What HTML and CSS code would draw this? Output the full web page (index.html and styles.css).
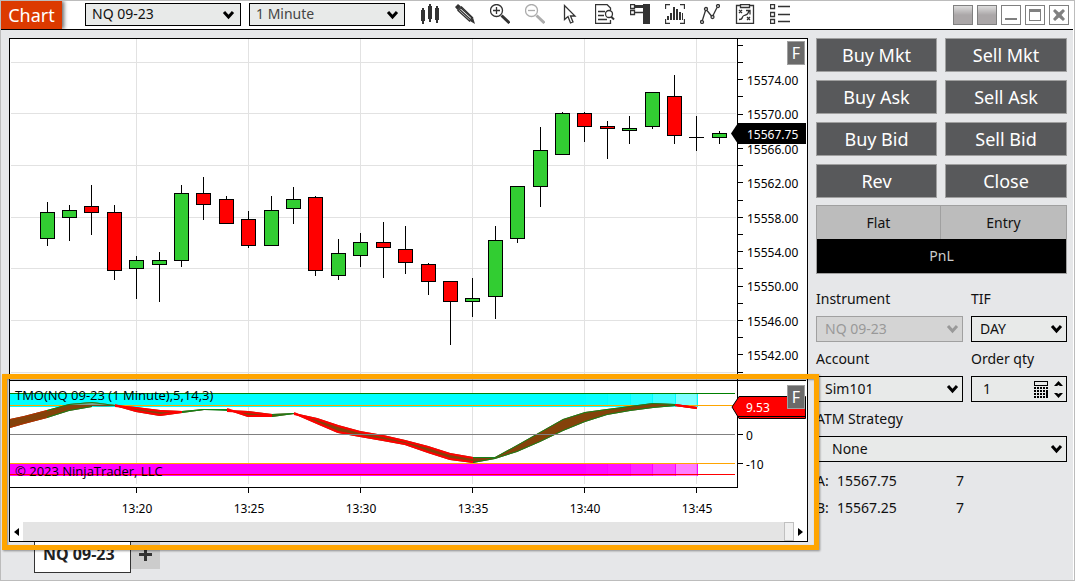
FILE: index.html
```
<!DOCTYPE html>
<html lang="en">
<head>
    <meta charset="UTF-8">
    <meta name="viewport" content="width=device-width, initial-scale=1.0">
    <title>Chart - NQ 09-23</title>
    <link rel="stylesheet" href="styles.css">
</head>
<body>
    <div class="window">
        <header class="toolbar">
            <h1 class="title">Chart</h1>
            <div class="select toolbar-select">
                <select aria-label="Instrument">
                    <option>NQ 09-23</option>
                </select>
                <svg class="chevron" viewBox="0 0 13 10"><path d="M2 2l4.500 5L11 2"/></svg>
            </div>
            <div class="select toolbar-select interval">
                <select aria-label="Interval">
                    <option>1 Minute</option>
                </select>
                <svg class="chevron" viewBox="0 0 13 10"><path d="M2 2l4.500 5L11 2"/></svg>
            </div>
            <nav class="tools">
                <button type="button" aria-label="Chart style">
                    <svg viewBox="0 0 20 20"><path class="fill" d="M1 6h1V4h2v2h1v11H4v3H2v-3H1zM8 2h1V0h2v2h1v13h-1v3H9v-3H8zM15 4h1V2h2v2h1v12h-1v3h-2v-3h-1z"/></svg>
                </button>
                <button type="button" aria-label="Drawing tools">
                    <svg viewBox="0 0 20 20"><path class="fill" d="M0 3l3-3 3 2.500L2.500 6zM15 17l3-3.500 2 6.500z"/><path class="line" d="M3 6.500L14.500 17l3-3.500L6.500 3z"/><path class="line" d="M4.500 5.500l11 10M6 4l11 10"/></svg>
                </button>
                <button type="button" aria-label="Zoom in">
                    <svg viewBox="0 0 20 20"><circle class="line" cx="6.500" cy="6.500" r="6"/><path class="line" d="M6.500 3v7M3 6.500h7"/><path class="line handle" d="M11.500 11.500l8 7.500"/></svg>
                </button>
                <button type="button" class="dim" aria-label="Zoom out" disabled>
                    <svg viewBox="0 0 20 20"><circle class="line" cx="6.500" cy="6.500" r="6"/><path class="line" d="M3 6.500h7"/><path class="line handle" d="M11.500 11.500l8 7.500"/></svg>
                </button>
                <button type="button" aria-label="Cursor">
                    <svg viewBox="0 0 20 20"><path class="line" d="M4.500 1.500v14L8 12.500l2.500 6.500 2.500-1-2.500-6H15z"/></svg>
                </button>
                <button type="button" aria-label="Data box">
                    <svg viewBox="0 0 20 20"><path class="line" d="M15.500 6V4L12 .500H.500v19h15V16"/><path class="line" d="M3 7.500h7M3 11.500h6M3 15.500h9"/><circle class="line" cx="14" cy="10" r="3.500"/><path class="line thick" d="M16 12.500l3 3"/></svg>
                </button>
                <button type="button" aria-label="Chart trader">
                    <svg viewBox="0 0 20 20"><path class="fill" d="M13 0h7v20h-7z"/><path class="line" d="M.500.500h4v4h-4zM.500 6.500h4v4h-4zM5 8.500h8"/><path class="fill" d="M5 1h8v3H5z"/></svg>
                </button>
                <button type="button" aria-label="Indicators">
                    <svg viewBox="0 0 20 20"><path class="line" d="M5 .500H.500V5M15 .500h4.500V5M5 19.500H.500V15M15 19.500h4.500V15"/><path class="fill" d="M2 12h2v4H2zM5 9h2v7H5zM8 3h2v13H8zM11 5h2v11h-2zM14 8h2v8h-2zM17 9h1v7h-1z"/></svg>
                </button>
                <button type="button" aria-label="Strategies">
                    <svg viewBox="0 0 20 20"><path class="line" d="M2.500 16L5.500 6.500M7 6.500l4.500 5.500M13 11.500l4-8"/><circle class="line" cx="2" cy="18" r="1.500"/><circle class="line" cx="6" cy="5" r="1.500"/><circle class="line" cx="12.500" cy="13" r="1.500"/><circle class="line" cx="18" cy="2" r="1.500"/></svg>
                </button>
                <button type="button" aria-label="Strategy plan">
                    <svg viewBox="0 0 20 20"><path class="line" d="M5 1.500H1.500v18h17v-18H15M5.500.500h9v3h-9z"/><path class="line" d="M4 6l3 3M7 6L4 9M12 13l3 3M15 13l-3 3M4 15.500c5 0 2-3 5-4s4-1 5-5M11 6.500h4v4"/></svg>
                </button>
                <button type="button" aria-label="Properties">
                    <svg viewBox="0 0 20 20"><path class="line" d="M.500.500h4v4h-4zM.500 8.500h4v4h-4zM.500 15.500h4v4h-4zM8 2.500h12M8 10.500h12M8 17.500h12"/></svg>
                </button>
            </nav>
            <div class="window-buttons">
                <button type="button" class="shaded" aria-label="Link instrument"></button>
                <button type="button" class="shaded" aria-label="Link interval"></button>
                <button type="button" aria-label="Minimize"><svg viewBox="0 0 18 18"><path d="M3 12h12v2H3z"/></svg></button>
                <button type="button" aria-label="Maximize"><svg viewBox="0 0 18 18"><path d="M3 3h12v12H3zM4 6v8h10V6z" fill-rule="evenodd"/></svg></button>
                <button type="button" aria-label="Close window"><svg viewBox="0 0 18 18"><path d="M3 5l2-2 4 3.500L13 3l2 2-3.500 4 3.500 4-2 2-4-3.500L5 15l-2-2 3.500-4z"/></svg></button>
            </div>
        </header>

        <div class="content">
            <main class="chart-column">
                <div class="chart">
                    <svg class="plot" id="plot" viewBox="10 39 797 483"></svg>
                    <button type="button" class="fixed-scale">F</button>
                    <button type="button" class="fixed-scale lower">F</button>
                    <div class="scrollbar">
                        <button type="button" aria-label="Scroll left"><svg viewBox="0 0 5 8"><path d="M5 0v8L0 4z"/></svg></button>
                        <div class="track"><div class="thumb"></div></div>
                        <button type="button" aria-label="Scroll right"><svg viewBox="0 0 5 8"><path d="M0 0v8l5-4z"/></svg></button>
                    </div>
                    <div class="highlight"></div>
                </div>
                <div class="tabs">
                    <button type="button" class="tab">NQ 09-23</button>
                    <button type="button" class="add-tab" aria-label="Add tab"><svg viewBox="0 0 13 13"><path d="M5 0h3v5h5v3H8v5H5V8H0V5h5z"/></svg></button>
                </div>
            </main>

            <aside class="trader">
                <div class="orders">
                    <button type="button">Buy Mkt</button>
                    <button type="button">Sell Mkt</button>
                    <button type="button">Buy Ask</button>
                    <button type="button">Sell Ask</button>
                    <button type="button">Buy Bid</button>
                    <button type="button">Sell Bid</button>
                    <button type="button">Rev</button>
                    <button type="button">Close</button>
                </div>
                <div class="position">
                    <div class="position-row">
                        <span>Flat</span>
                        <span>Entry</span>
                    </div>
                    <div class="pnl">PnL</div>
                </div>
                <div class="fields">
                    <div class="field">
                        <label for="instrument">Instrument</label>
                        <div class="select disabled">
                            <select id="instrument" disabled>
                                <option>NQ 09-23</option>
                            </select>
                            <svg class="chevron" viewBox="0 0 13 10"><path d="M2 2l4.500 5L11 2"/></svg>
                        </div>
                    </div>
                    <div class="field">
                        <label for="tif">TIF</label>
                        <div class="select">
                            <select id="tif">
                                <option>DAY</option>
                            </select>
                            <svg class="chevron" viewBox="0 0 13 10"><path d="M2 2l4.500 5L11 2"/></svg>
                        </div>
                    </div>
                    <div class="field">
                        <label for="account">Account</label>
                        <div class="select">
                            <select id="account">
                                <option>Sim101</option>
                            </select>
                            <svg class="chevron" viewBox="0 0 13 10"><path d="M2 2l4.500 5L11 2"/></svg>
                        </div>
                    </div>
                    <div class="field">
                        <label for="qty">Order qty</label>
                        <div class="qty">
                            <input id="qty" type="number" value="1" min="1">
                            <svg class="calc" viewBox="0 0 14 17"><path d="M0 0h14v5H0zM1 1v3h12V1z" fill-rule="evenodd"/><path d="M0 6h2v2H0zM3 6h2v2H3zM6 6h2v2H6zM9 6h2v2H9zM12 6h2v2h-2zM0 9h2v2H0zM3 9h2v2H3zM6 9h2v2H6zM9 9h2v2H9zM12 9h2v8h-2zM0 12h2v2H0zM3 12h2v2H3zM6 12h2v2H6zM9 12h2v2H9zM0 15h2v2H0zM3 15h2v2H3zM6 15h2v2H6zM9 15h2v2H9z"/></svg>
                            <svg class="spin" viewBox="0 0 9 17"><path d="M0 5l4.500-5L9 5H6L4.500 4 3 5zM0 12h3l1.500 1L6 12h3l-4.500 5z"/></svg>
                        </div>
                    </div>
                    <div class="field wide">
                        <label for="atm">ATM Strategy</label>
                        <div class="select indent">
                            <select id="atm">
                                <option>None</option>
                            </select>
                            <svg class="chevron" viewBox="0 0 13 10"><path d="M2 2l4.500 5L11 2"/></svg>
                        </div>
                    </div>
                </div>
                <div class="quotes">
                    <span>A:</span><span>15567.75</span><span>7</span>
                    <span>B:</span><span>15567.25</span><span>7</span>
                </div>
            </aside>
        </div>
    </div>
    <script src="chart.js"></script>
</body>
</html>
```
FILE: styles.css
```
/* Base and Reset */
* {
    margin: 0;
    padding: 0;
    box-sizing: border-box;
}

body {
    font-family: 'Noto Sans', 'Open Sans', sans-serif;
    font-size: 14px;
    line-height: 20px;
    color: #111;
    background: #fff;
}

button,
select,
input {
    font: inherit;
    color: inherit;
    border: none;
    border-radius: 0;
    background: none;
}

.window {
    min-height: 100vh;
    display: flex;
    flex-direction: column;
    border: 1px solid #bcbcbc;
    padding-right: 1px;
}

/* Toolbar */
.toolbar {
    display: flex;
    align-items: flex-start;
    height: 29px;
    background: #fff;
    border-bottom: 1px solid #000;
}

.title {
    align-self: stretch;
    width: 61px;
    margin-right: 23px;
    font-size: 18px;
    font-weight: 400;
    line-height: 28px;
    text-align: center;
    color: #fff;
    background: #dc3a00;
    box-shadow: 2px 0 4px rgba(0, 0, 0, 0.6);
    clip-path: inset(0 -8px 0 0);
}

.select {
    position: relative;
}

.select select {
    display: block;
    width: 100%;
    height: 26px;
    padding: 0 24px 0 8px;
    appearance: none;
    background: #e8eae9;
    border: 1px solid #000;
}

.toolbar-select {
    width: 156px;
    margin: 2px 8px 0 0;
}

.toolbar-select select {
    height: 23px;
    padding-left: 6px;
    padding-bottom: 1px;
}

.toolbar-select.interval {
    margin-right: 7px;
}

.interval select {
    color: #444;
}

.chevron {
    position: absolute;
    right: 4px;
    top: 50%;
    width: 13px;
    height: 10px;
    margin-top: -5px;
    fill: none;
    stroke: #000;
    stroke-width: 3;
    pointer-events: none;
}

.toolbar-select .chevron {
    right: 6px;
}

.tools {
    display: flex;
    padding-top: 3px;
}

.tools button {
    display: flex;
    justify-content: center;
    width: 35px;
    height: 20px;
}

.tools svg {
    width: 20px;
    height: 20px;
}

.tools .fill {
    fill: #333;
}

.tools .line {
    fill: none;
    stroke: #333;
    stroke-width: 1.3;
}

.tools .thick {
    stroke-width: 2;
}

.tools .handle {
    stroke-width: 3;
}

.tools .dim {
    opacity: 0.4;
}

.window-buttons {
    display: flex;
    gap: 4px;
    margin-left: auto;
    padding: 4px 4px 0 0;
}

.window-buttons button {
    width: 20px;
    height: 20px;
    border: 1px solid #808080;
    background: #fff;
}

.window-buttons .shaded {
    background: linear-gradient(to bottom, #ddd, #aba7a8 50%);
}

.window-buttons svg {
    display: block;
    fill: #808080;
}

/* Content */
.content {
    flex: 1;
    display: grid;
    grid-template-columns: 1fr 251px;
    gap: 8px;
    align-items: start;
    padding: 8px 6px 0 8px;
    background: #e6e7e9;
}

.chart {
    position: relative;
    z-index: 1;
    background: #fff;
    border: 1px solid #000;
}

.plot {
    display: block;
    width: 100%;
    font-size: 12px;
}

.plot .crisp {
    shape-rendering: crispEdges;
}

.plot .study-label {
    font-family: 'Open Sans', 'Noto Sans', sans-serif;
    font-size: 13px;
}

.fixed-scale {
    position: absolute;
    top: 2px;
    right: 2px;
    width: 18px;
    height: 24px;
    font-size: 16px;
    color: #fff;
    background: #6a6a6a;
    border: 1px solid #a0a0a0;
}

.fixed-scale.lower {
    top: 346px;
}

.scrollbar {
    display: flex;
    height: 19px;
    background: #e4e4e4;
}

.scrollbar button {
    display: flex;
    align-items: center;
    justify-content: center;
    width: 13px;
    background: #fff;
}

.scrollbar svg {
    width: 5px;
    height: 8px;
}

.track {
    flex: 1;
    display: flex;
    justify-content: flex-end;
}

.thumb {
    width: 10px;
    background: #f0f0f0;
    border: 1px solid #c0c0c0;
}

.highlight {
    position: absolute;
    top: 335px;
    right: -12px;
    bottom: -9px;
    left: -8px;
    border: 5px solid #ffa500;
    box-shadow: 1px 1px 2px rgba(0, 0, 0, 0.4), inset 1px 1px 2px rgba(0, 0, 0, 0.4);
    pointer-events: none;
}

.tabs {
    display: flex;
    align-items: flex-start;
    padding-left: 25px;
}

.tab {
    width: 97px;
    height: 31px;
    padding: 0 0 6px 8px;
    font-size: 16px;
    font-weight: 700;
    text-align: left;
    color: #222;
    background: #fff;
    border: 1px solid #333;
    border-top: none;
}

.add-tab {
    width: 29px;
    height: 27px;
    background: #ccc;
}

.add-tab svg {
    width: 13px;
    height: 13px;
    fill: #333;
}

/* Chart trader */
.orders {
    display: grid;
    grid-template-columns: 121px 1fr;
    gap: 8px;
    margin-bottom: 7px;
}

.orders button {
    height: 34px;
    font-size: 18px;
    color: #fff;
    background: #58595b;
    border: 1px solid #a0a0a0;
}

.position {
    border: 1px solid #a0a0a0;
    text-align: center;
}

.position-row {
    display: grid;
    grid-template-columns: 123px 1fr;
    line-height: 33px;
    background: #bcbcbc;
}

.position-row span + span {
    border-left: 1px solid #a0a0a0;
}

.pnl {
    line-height: 34px;
    color: #ccc;
    background: #000;
}

.fields {
    display: grid;
    grid-template-columns: 147px 1fr;
    gap: 7px 8px;
    margin-top: 15px;
}

.field {
    min-width: 0;
}

.field label {
    display: block;
    margin-bottom: 7px;
}

.wide {
    grid-column: 1 / -1;
}

.indent select {
    padding-left: 15px;
}

.disabled select {
    color: #999;
    background: #d4d4d4;
    border-color: #a0a0a0;
    opacity: 1;
}

.disabled .chevron {
    stroke: #999;
}

.qty {
    display: flex;
    align-items: center;
    gap: 6px;
    height: 26px;
    padding: 0 3px 0 11px;
    background: #e8eae9;
    border: 1px solid #000;
}

.qty input {
    flex: 1;
    width: 0;
    min-width: 0;
    appearance: textfield;
}

.calc {
    width: 14px;
    height: 17px;
}

.spin {
    width: 9px;
    height: 17px;
}

.quotes {
    display: grid;
    grid-template-columns: 21px 119px 1fr;
    row-gap: 7px;
    margin-top: 9px;
}
```
FILE: chart.js
```
const plot = document.getElementById('plot');
const up = '#32cd32';
const down = '#ff0000';
const step = 22.4;

// [wick x, high, low, body top, body bottom, color]
const candles = [
    [47, 202, 246, 212, 238, up], [69, 205, 241, 210, 217, up], [91, 185, 235, 206, 212, down],
    [114, 205, 280, 212, 270, down], [136, 256, 299, 260, 268, up], [159, 252, 302, 260, 264, up],
    [181, 185, 267, 193, 260, up], [203, 177, 220, 193, 204, down], [226, 196, 223, 199, 223, down],
    [248, 211, 248, 219, 245, down], [271, 196, 246, 210, 245, up], [293, 187, 224, 199, 208, up],
    [315, 196, 276, 197, 270, down], [338, 239, 280, 253, 275, up], [360, 233, 267, 242, 255, up],
    [383, 222, 278, 242, 247, down], [405, 226, 274, 249, 262, down], [428, 263, 295, 264, 281, down],
    [450, 281, 345, 281, 301, down], [472, 278, 317, 298, 301, up], [495, 226, 319, 240, 296, up],
    [517, 186, 243, 186, 238, up], [540, 127, 207, 150, 186, up], [562, 112, 154, 113, 154, up],
    [584, 112, 142, 113, 126, down], [607, 121, 159, 126, 128, down], [629, 116, 144, 128, 130, up],
    [652, 92, 129, 92, 126, up], [674, 75, 144, 96, 135, down], [696, 116, 151, 137, 137, up],
    [719, 131, 144, 133, 137, up]
];

// TMO ribbon: x, upper edge, lower edge
const ribbon = [
    [10, 419, 428], [24, 416, 424], [47, 410, 418], [69, 404, 411], [92, 402, 407], [115, 405, 406],
    [136, 407, 412], [160, 410, 416], [182, 411, 413], [204, 409, 410], [227, 410, 410], [248, 411, 417],
    [272, 414, 417], [294, 413, 414], [317, 418, 424], [338, 425, 433], [360, 431, 437], [383, 435, 441],
    [405, 440, 445], [428, 446, 453], [450, 453, 460], [473, 457, 463], [495, 457, 459], [517, 445, 452],
    [540, 432, 442], [563, 419, 431], [585, 412, 422], [607, 409, 415], [630, 406, 411], [653, 403, 408],
    [675, 404, 406], [697, 407, 409]
];

// stretches of the ribbon where TMO is below its signal
const fallingRanges = [[115, 182], [227, 272], [294, 473], [675, 697]];

function line(x1, y1, x2, y2, color) {
    return `<path class="crisp" d="M${x1} ${y1}L${x2} ${y2}" stroke="${color}"/>`;
}

function rect(x, y, w, h, color, extra = '') {
    return `<rect class="crisp" x="${x}" y="${y}" width="${w}" height="${h}" fill="${color}" ${extra}/>`;
}

function drawGrid() {
    let out = '';
    [62, 113, 165, 217, 268, 320, 372].forEach(y => out += line(11, y + 0.5, 736, y + 0.5, '#e2e2e2'));
    for (let i = 0; i < 6; i++) {
        const x = 136 + i * 112;
        out += line(x + 0.5, 39, x + 0.5, 484, '#e2e2e2');
        out += line(x + 0.5, 488, x + 0.5, 493, '#000');
        out += `<text x="${x + 1}" y="513" text-anchor="middle">13:${20 + i * 5}</text>`;
    }
    return out;
}

function drawAxes() {
    let out = line(737.5, 39, 737.5, 488, '#000') + line(10, 487.5, 738, 487.5, '#000') + line(10, 380.5, 806, 380.5, '#000');
    for (let i = -1; i < 19; i++) {
        const y = Math.round(62 + i * 17.2) + 0.5;
        out += line(738, y, 743, y, '#000');
    }
    for (let i = 0; i < 9; i++) {
        out += `<text x="747" y="${Math.round(85 + i * 34.4)}">${15574 - i * 4}.00</text>`;
    }
    out += line(738, 434.5, 743, 434.5, '#000') + line(738, 463.5, 743, 463.5, '#000');
    out += '<text x="746" y="440">0</text><text x="746" y="469">-10</text>';
    return out;
}

function drawCandles() {
    return candles.map(([x, high, low, top, bottom, color]) => {
        const wick = line(x + 0.5, high, x + 0.5, low, '#000');
        if (top === bottom) {
            return wick + line(x - 7, top + 0.5, x + 8, top + 0.5, '#000');
        }
        return wick + rect(x - 6.5, top + 0.5, 14, bottom - top, color, 'stroke="#000"');
    }).join('');
}

function drawBands() {
    let out = '';
    [[394, 13, '#00ffff'], [464, 12, '#ff00ff']].forEach(([y, h, color]) => {
        out += rect(10, y, 575, h, color);
        [0.97, 0.93, 0.86, 0.75, 0.5].forEach((opacity, i) => {
            const x = Math.round(585 + i * step);
            out += rect(x, y, Math.round(585 + (i + 1) * step) - x, h, color, `fill-opacity="${opacity}"`);
            out += line(x + 0.5, y, x + 0.5, y + h, color);
        });
        out += line(697.5, y, 697.5, y + h, color);
    });
    return out;
}

function drawRibbon() {
    const top = ribbon.map(p => `${p[0]} ${p[1]}`);
    const bottom = ribbon.map(p => `${p[0]} ${p[2]}`).reverse();
    let out = `<path d="M${top.join('L')}L${bottom.join('L')}z" fill="#84420a"/>`;
    out += '<path d="M64 405L92 402L115 405z" fill="#7f9f8f"/><path d="M92 406H115L92 407z" fill="#00ffff"/>';
    for (let i = 1; i < ribbon.length; i++) {
        const [x1, t1, b1] = ribbon[i - 1];
        const [x2, t2, b2] = ribbon[i];
        const falling = fallingRanges.some(([from, to]) => x1 >= from && x2 <= to);
        const color = falling ? '#ff0000' : (i < 3 ? '#b03000' : '#14821a');
        const width = falling ? 2 : 1;
        const inset = width / 2;
        out += `<path d="M${x1} ${t1 + inset}L${x2} ${t2 + inset}" stroke="${color}" stroke-width="${width}"/>`;
        if (x2 !== 115) {
            out += `<path d="M${x1} ${b1 - inset}L${x2} ${b2 - inset}" stroke="${color}" stroke-width="${width}"/>`;
        }
    }
    return out;
}

function drawMarkers() {
    return `<path d="M731 133.500L738 123H806V144H738z" fill="#000"/>
        <text x="747" y="139" fill="#fff">15567.75</text>
        <path d="M732 407L739 396.500H805.500V418.500H739z" fill="#ff0000" stroke="#000"/>
        ${line(738, 416.5, 806, 416.5, '#000')}
        <text x="746" y="412" fill="#fff">9.53</text>`;
}

plot.innerHTML = drawGrid() + drawCandles() + drawBands()
    + line(10, 393.5, 735, 393.5, '#008000') + line(10, 405.5, 735, 405.5, '#ffa500')
    + line(10, 463.5, 735, 463.5, '#ffa500') + line(10, 474.5, 735, 474.5, '#ff0000')
    + drawRibbon() + line(10, 434.5, 735, 434.5, '#808080') + drawAxes() + drawMarkers()
    + '<text class="study-label" x="15" y="400">TMO(NQ 09-23 (1 Minute),5,14,3)</text>'
    + '<text class="study-label" x="15" y="476">© 2023 NinjaTrader, LLC</text>';
```
